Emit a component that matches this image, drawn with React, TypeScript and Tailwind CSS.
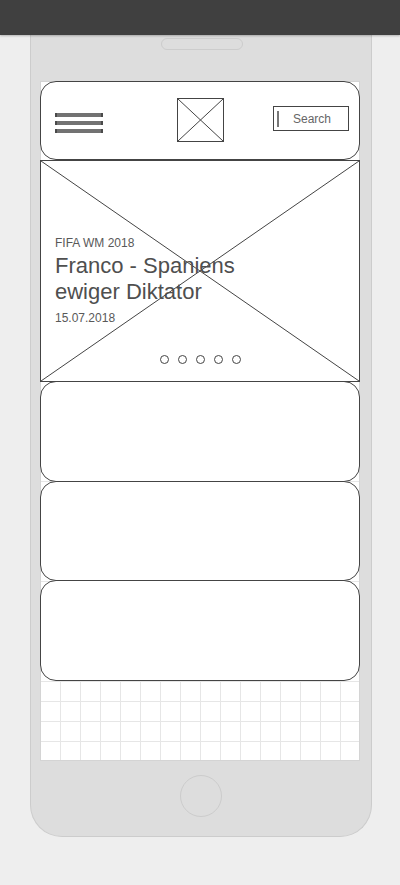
import React from "react";

const font = { fontFamily: '"Liberation Sans", Arial, sans-serif' };

function XBox({ className = "" }: { className?: string }) {
  return (
    <svg className={className} viewBox="0 0 100 100" preserveAspectRatio="none">
      <line x1="0" y1="0" x2="100" y2="100" stroke="#444" strokeWidth="1" vectorEffect="non-scaling-stroke" />
      <line x1="100" y1="0" x2="0" y2="100" stroke="#444" strokeWidth="1" vectorEffect="non-scaling-stroke" />
    </svg>
  );
}

export default function App() {
  return (
    <div className="min-h-[885px] w-[400px] bg-[#eeeeee] flex flex-col" style={font}>
      <div className="relative z-10 h-[35px] bg-[#404040] shadow-[0_1px_2px_rgba(0,0,0,0.25)]" />
      <div className="ml-[30px] w-[342px] h-[802px] bg-[#dddddd] border-x border-b border-[#cccccc] rounded-b-[32px] flex flex-col items-start">
        <div className="self-center ml-[2px] mt-[3px] w-[82px] h-[12px] rounded-full border border-[#cccccc]" />
        <div className="ml-[9px] mt-[31px] w-[320px] h-[680px] bg-white border border-[#d4d4d4] bg-[linear-gradient(to_right,#e6e6e6_1px,transparent_1px),linear-gradient(to_bottom,#e6e6e6_1px,transparent_1px)] bg-[size:20px_20px] bg-[position:-1px_-1px] flex flex-col">
          {/* header */}
          <div className="-mx-px -mt-px h-[79px] bg-white border border-[#444] rounded-[16px] flex items-center pl-[14px] pr-[10px]">
            <div className="flex-1 flex flex-col gap-[4px] pt-[4px]">
              <div className="w-[48px] h-[4px] bg-[#727272] border-x-2 border-[#4a4a4a]" />
              <div className="w-[48px] h-[4px] bg-[#727272] border-x-2 border-[#4a4a4a]" />
              <div className="w-[48px] h-[4px] bg-[#727272] border-x-2 border-[#4a4a4a]" />
            </div>
            <div className="relative w-[47px] h-[44px] border border-[#444] -ml-[3px] mr-[1px] -mt-[1px]">
              <XBox className="absolute inset-0 w-full h-full" />
            </div>
            <div className="flex-1 flex justify-end -mt-[4px]">
              <div className="w-[76px] h-[25px] border border-[#444] flex items-center pl-[3px]">
                <div className="w-[2px] h-[16px] bg-[#777]" />
                <span className="ml-[14px] text-[12px] leading-[14px] text-[#666]">Search</span>
              </div>
            </div>
          </div>
          {/* hero */}
          <div className="relative -mx-px h-[222px] bg-white border border-[#444] flex flex-col pl-[14px] pt-[75px]">
            <XBox className="absolute inset-0 w-full h-full" />
            <div className="relative text-[12px] leading-[14px] text-[#595959]">FIFA WM 2018</div>
            <div className="relative mt-[3px] text-[22px] leading-[26px] text-[#4f4f4f]">
              Franco - Spaniens
              <br />
              ewiger Diktator
            </div>
            <div className="relative mt-[6px] text-[12px] leading-[14px] text-[#595959]">15.07.2018</div>
            <div className="relative -ml-[14px] mt-[30px] flex justify-center gap-[9px]">
              <div className="w-[9px] h-[9px] rounded-full border border-[#444] bg-white" />
              <div className="w-[9px] h-[9px] rounded-full border border-[#444] bg-white" />
              <div className="w-[9px] h-[9px] rounded-full border border-[#444] bg-white" />
              <div className="w-[9px] h-[9px] rounded-full border border-[#444] bg-white" />
              <div className="w-[9px] h-[9px] rounded-full border border-[#444] bg-white" />
            </div>
          </div>
          <div className="-mx-px -mt-px h-[101px] bg-white border border-[#444] rounded-[16px]" />
          <div className="-mx-px -mt-px h-[100px] bg-white border border-[#444] rounded-[16px]" />
          <div className="-mx-px -mt-px h-[101px] bg-white border border-[#444] rounded-[16px]" />
        </div>
        <div className="self-center mt-[14px] w-[42px] h-[42px] rounded-full border border-[#cccccc]" />
      </div>
    </div>
  );
}
